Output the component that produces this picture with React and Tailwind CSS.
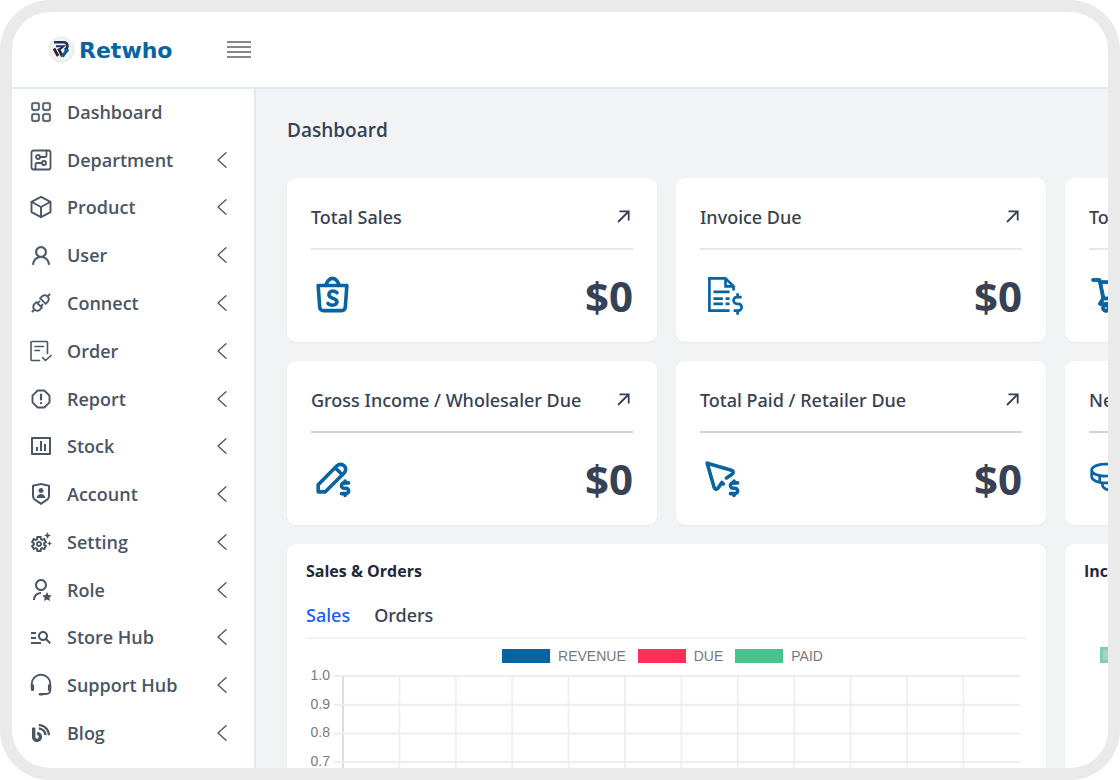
import React from "react";
import { BsGrid } from "react-icons/bs";
import { PiCoins } from "react-icons/pi";
import { AiOutlineUser, AiOutlineApi, AiOutlineShoppingCart } from "react-icons/ai";
import { RiBarChartBoxLine, RiShieldUserLine, RiUserStarLine } from "react-icons/ri";
import { MdOutlineSettingsSuggest, MdOutlineManageSearch } from "react-icons/md";
import { FaBlog } from "react-icons/fa";
import { LiaFileInvoiceDollarSolid } from "react-icons/lia";
import { TbBrandShopee, TbPencilDollar, TbPointerDollar } from "react-icons/tb";

function LineIcon({ size = 24, width = "1.6", children }) {
  return (
    <svg width={size} height={size} viewBox="0 0 24 24" fill="none" stroke="currentColor" strokeWidth={width} strokeLinecap="round" strokeLinejoin="round">
      {children}
    </svg>
  );
}

const GridIcon = () => <BsGrid size={22} strokeWidth={0.4} />;
const UserIcon = () => <AiOutlineUser size={25} strokeWidth={14} />;
const PlugIcon = () => <AiOutlineApi size={24} strokeWidth={12} />;
const BlogIcon = () => <FaBlog size={18} />;
const CartIcon = ({ size, className }) => (
  <AiOutlineShoppingCart size={size} strokeWidth={22} className={className} />
);

const DepartmentIcon = () => (
  <LineIcon width="1.8">
    <rect x="2.500" y="2.500" width="19" height="19" rx="2" />
    <circle cx="9" cy="9" r="2" />
    <path d="M11 9h5a1.500 1.500 0 0 0 1.500-1.500V3" />
    <circle cx="15" cy="15" r="2" />
    <path d="M13 15H8a1.500 1.500 0 0 0-1.500 1.500V21" />
  </LineIcon>
);

const BoxIcon = () => (
  <LineIcon width="1.900">
    <path d="M12 1.800 21.500 6.800V17.200L12 22.200 2.500 17.200V6.800Z" />
    <path d="M2.800 7 12 12l9.200-5M12 12v10" />
  </LineIcon>
);

const OrderIcon = () => (
  <LineIcon width="1.600">
    <path d="M10.500 21.500H3a1 1 0 0 1-1-1V3.500a1 1 0 0 1 1-1h14.500a1 1 0 0 1 1 1V14.500" />
    <path d="M6 7.500h8.500M6 11.500h4.500M13.500 18.500l3 3 5.500-5" />
  </LineIcon>
);

const ReportIcon = () => (
  <LineIcon width="1.900">
    <path d="M8.700 3.500h6.600L20.500 8.700v6.600L15.300 20.500H8.700L3.500 15.300V8.700Z" />
    <path d="M12 7.500v5M12 16v.2" strokeWidth="2.200" />
  </LineIcon>
);

const HeadsetIcon = () => (
  <LineIcon width="1.900">
    <path d="M2.700 14v-3a9.300 9.300 0 0 1 18.600 0v6a4 4 0 0 1-4 4H13" />
    <path d="M3.500 12.500v4M20.500 12.500v4" strokeWidth="3.200" />
    <path d="M11 21.200h2.500" strokeWidth="2.600" />
  </LineIcon>
);

function Chevron() {
  return (
    <svg className="h-4 w-[10px]" viewBox="0 0 10 16" fill="none" stroke="currentColor" strokeWidth="1.3" strokeLinecap="round" strokeLinejoin="round">
      <path d="M9 .8 1 8l8 7.200" />
    </svg>
  );
}

function LogoMark() {
  return (
    <svg className="h-[27px] w-[27px] shrink-0" viewBox="0 0 27 27" fill="none">
      <circle cx="13.500" cy="13.500" r="12.500" fill="#f3f3f3" stroke="#e4e4e4" />
      <path d="M6 6.300h9.500c5 0 5 6.400 1 7.400" stroke="#22305a" strokeWidth="2.600" />
      <path d="M8 10.200h7.500l-3.500 3" stroke="#22305a" strokeWidth="2" />
      <path d="M6 12.500l4 7.500M10.500 12.500l3.800 8" stroke="#2b2438" strokeWidth="2.800" />
      <path d="M14.300 20.500l5.600-7.500" stroke="#0a5c9c" strokeWidth="3.200" />
    </svg>
  );
}

const NAV = [
  ["Dashboard", GridIcon, false],
  ["Department", DepartmentIcon, true],
  ["Product", BoxIcon, true],
  ["User", UserIcon, true],
  ["Connect", PlugIcon, true],
  ["Order", OrderIcon, true],
  ["Report", ReportIcon, true],
  ["Stock", RiBarChartBoxLine, true],
  ["Account", RiShieldUserLine, true],
  ["Setting", MdOutlineSettingsSuggest, true],
  ["Role", RiUserStarLine, true],
  ["Store Hub", MdOutlineManageSearch, true],
  ["Support Hub", HeadsetIcon, true],
  ["Blog", BlogIcon, true],
];

const STATS = [
  ["Total Sales", TbBrandShopee, "border-gray-200"],
  ["Invoice Due", LiaFileInvoiceDollarSolid, "border-gray-200"],
  ["Total Purchase", CartIcon, "border-gray-200"],
  ["Gross Income / Wholesaler Due", TbPencilDollar, "border-gray-300"],
  ["Total Paid / Retailer Due", TbPointerDollar, "border-gray-300"],
  ["Net Profit", PiCoins, "border-gray-300"],
];

function StatCard({ title, Icon, line }) {
  return (
    <section className="rounded-[9px] bg-white px-6 pt-6 shadow-xs">
      <div className={`flex items-start justify-between border-b-2 pb-4 ${line}`}>
        <h2 className="font-['Noto_Sans',sans-serif] text-[18px] leading-[30px] font-medium whitespace-nowrap text-gray-700">{title}</h2>
        <a href="#details" aria-label={`Open ${title}`} className="pt-2 pr-[3px] text-gray-700">
          <svg className="h-[13px] w-[13px]" viewBox="0 0 13 13" fill="none" stroke="currentColor" strokeWidth="1.8">
            <path d="M1 12 11.500 1.500M2.500 1.300h9.200v9.200" />
          </svg>
        </a>
      </div>
      <div className="flex h-[92px] items-center justify-between">
        <Icon size={43} className="mb-1 text-[#0664a1]" />
        <p className="text-[42px] leading-[48px] font-bold text-gray-700">$0</p>
      </div>
    </section>
  );
}

const LEGEND = [
  ["REVENUE", "bg-[#0664a1]"],
  ["DUE", "bg-[#ff2f56]"],
  ["PAID", "bg-[#49c28c]"],
];

const TICKS = ["1.0", "0.9", "0.8", "0.7", "0.6", "0.5"];
const COLUMNS = [0, 1, 2, 3, 4, 5, 6, 7, 8, 9, 10, 11];

function LineChart() {
  return (
    <svg className="block h-[170px] w-full" viewBox="0 0 721 170" role="img" aria-label="Sales by month">
      {COLUMNS.map((i) => (
        <path key={i} d={`M${37 + i * 56.4} 10V170`} stroke={i === 0 ? "#dcdddf" : "#eff0f1"} strokeWidth="2" />
      ))}
      {TICKS.map((t, i) => (
        <g key={t}>
          <path d={`M28 ${10 + i * 28.7}H714`} stroke="#ecedee" strokeWidth="2" />
          <text x="24" y={14 + i * 28.7} textAnchor="end" className="fill-[#77797d] font-['Liberation_Sans',sans-serif] text-[14px]">
            {t}
          </text>
        </g>
      ))}
    </svg>
  );
}

export default function App() {
  return (
    <div className="h-screen overflow-hidden rounded-[50px] bg-[#eaeaea] p-3 font-['Open_Sans','Noto_Sans',sans-serif]">
      <div className="flex h-full flex-col overflow-hidden rounded-[38px] bg-white">
        <header className="flex h-[77px] shrink-0 items-center border-b-2 border-slate-200 pl-9">
          <a href="#home" className="flex items-center gap-1">
            <LogoMark />
            <span className="pt-[2px] font-['DejaVu_Sans',sans-serif] text-[22px] leading-7 font-bold text-[#0664a1]">Retwho</span>
          </a>
          <button type="button" aria-label="Toggle menu" className="ml-[55px] text-[#85868f]">
            <svg className="h-[18px] w-6" viewBox="0 0 24 18" stroke="currentColor" strokeWidth="2">
              <path d="M0 1h24M0 6h24M0 11h24M0 16h24" />
            </svg>
          </button>
        </header>

        <div className="flex min-h-0 flex-1">
          <nav className="w-[244px] shrink-0 border-r-2 border-slate-200 pb-[10px]">
            <ul className="flex h-full flex-col">
              {NAV.map(([label, Icon, nested]) => (
                <li key={label} className="flex-1">
                  <a href="#section" className="flex h-full items-center pr-[27px] pb-[2px] pl-[17px] text-gray-600">
                    <span className="flex w-6 shrink-0 justify-center">
                      <Icon size={24} />
                    </span>
                    <span className="ml-[14px] flex-1 text-[18px] leading-6 font-semibold whitespace-nowrap">{label}</span>
                    {nested && <Chevron />}
                  </a>
                </li>
              ))}
            </ul>
          </nav>

          <main className="min-w-0 flex-1 overflow-hidden bg-[#f2f3f5] pl-[31px]">
            <h1 className="pt-[27px] text-[19px] leading-7 font-semibold text-gray-700">Dashboard</h1>
            <div className="mt-[34px] grid grid-cols-[repeat(3,370px)] gap-[19px]">
              {STATS.map(([title, Icon, line]) => (
                <StatCard key={title} title={title} Icon={Icon} line={line} />
              ))}

              <section className="col-span-2 rounded-t-[9px] bg-white px-[19px] pt-[15px] shadow-xs">
                <h2 className="text-[16px] leading-6 font-bold text-gray-800">Sales &amp; Orders</h2>
                <div className="mt-[18px] flex gap-6 border-b-2 border-gray-100 pb-2 font-['Noto_Sans',sans-serif] text-[18px] leading-7 font-medium">
                  <button type="button" className="text-blue-600">Sales</button>
                  <button type="button" className="text-gray-700">Orders</button>
                </div>
                <ul className="flex justify-center gap-3 pt-[7px] pr-2 font-['Liberation_Sans',sans-serif] text-[14px] leading-5 text-[#77797d]">
                  {LEGEND.map(([label, color]) => (
                    <li key={label} className="flex items-center gap-2">
                      <span className={`h-[14px] w-12 ${color}`} />
                      {label}
                    </li>
                  ))}
                </ul>
                <LineChart />
              </section>

              <section className="rounded-t-[9px] bg-white px-[19px] pt-[15px] shadow-xs">
                <h2 className="text-[16px] leading-6 font-bold text-gray-800">Income &amp; Expense</h2>
                <div className="mt-16 ml-4 h-4 w-12 border-3 border-[#7ed0ac] bg-[#a5cfd0]" />
              </section>
            </div>
          </main>
        </div>
      </div>
    </div>
  );
}
